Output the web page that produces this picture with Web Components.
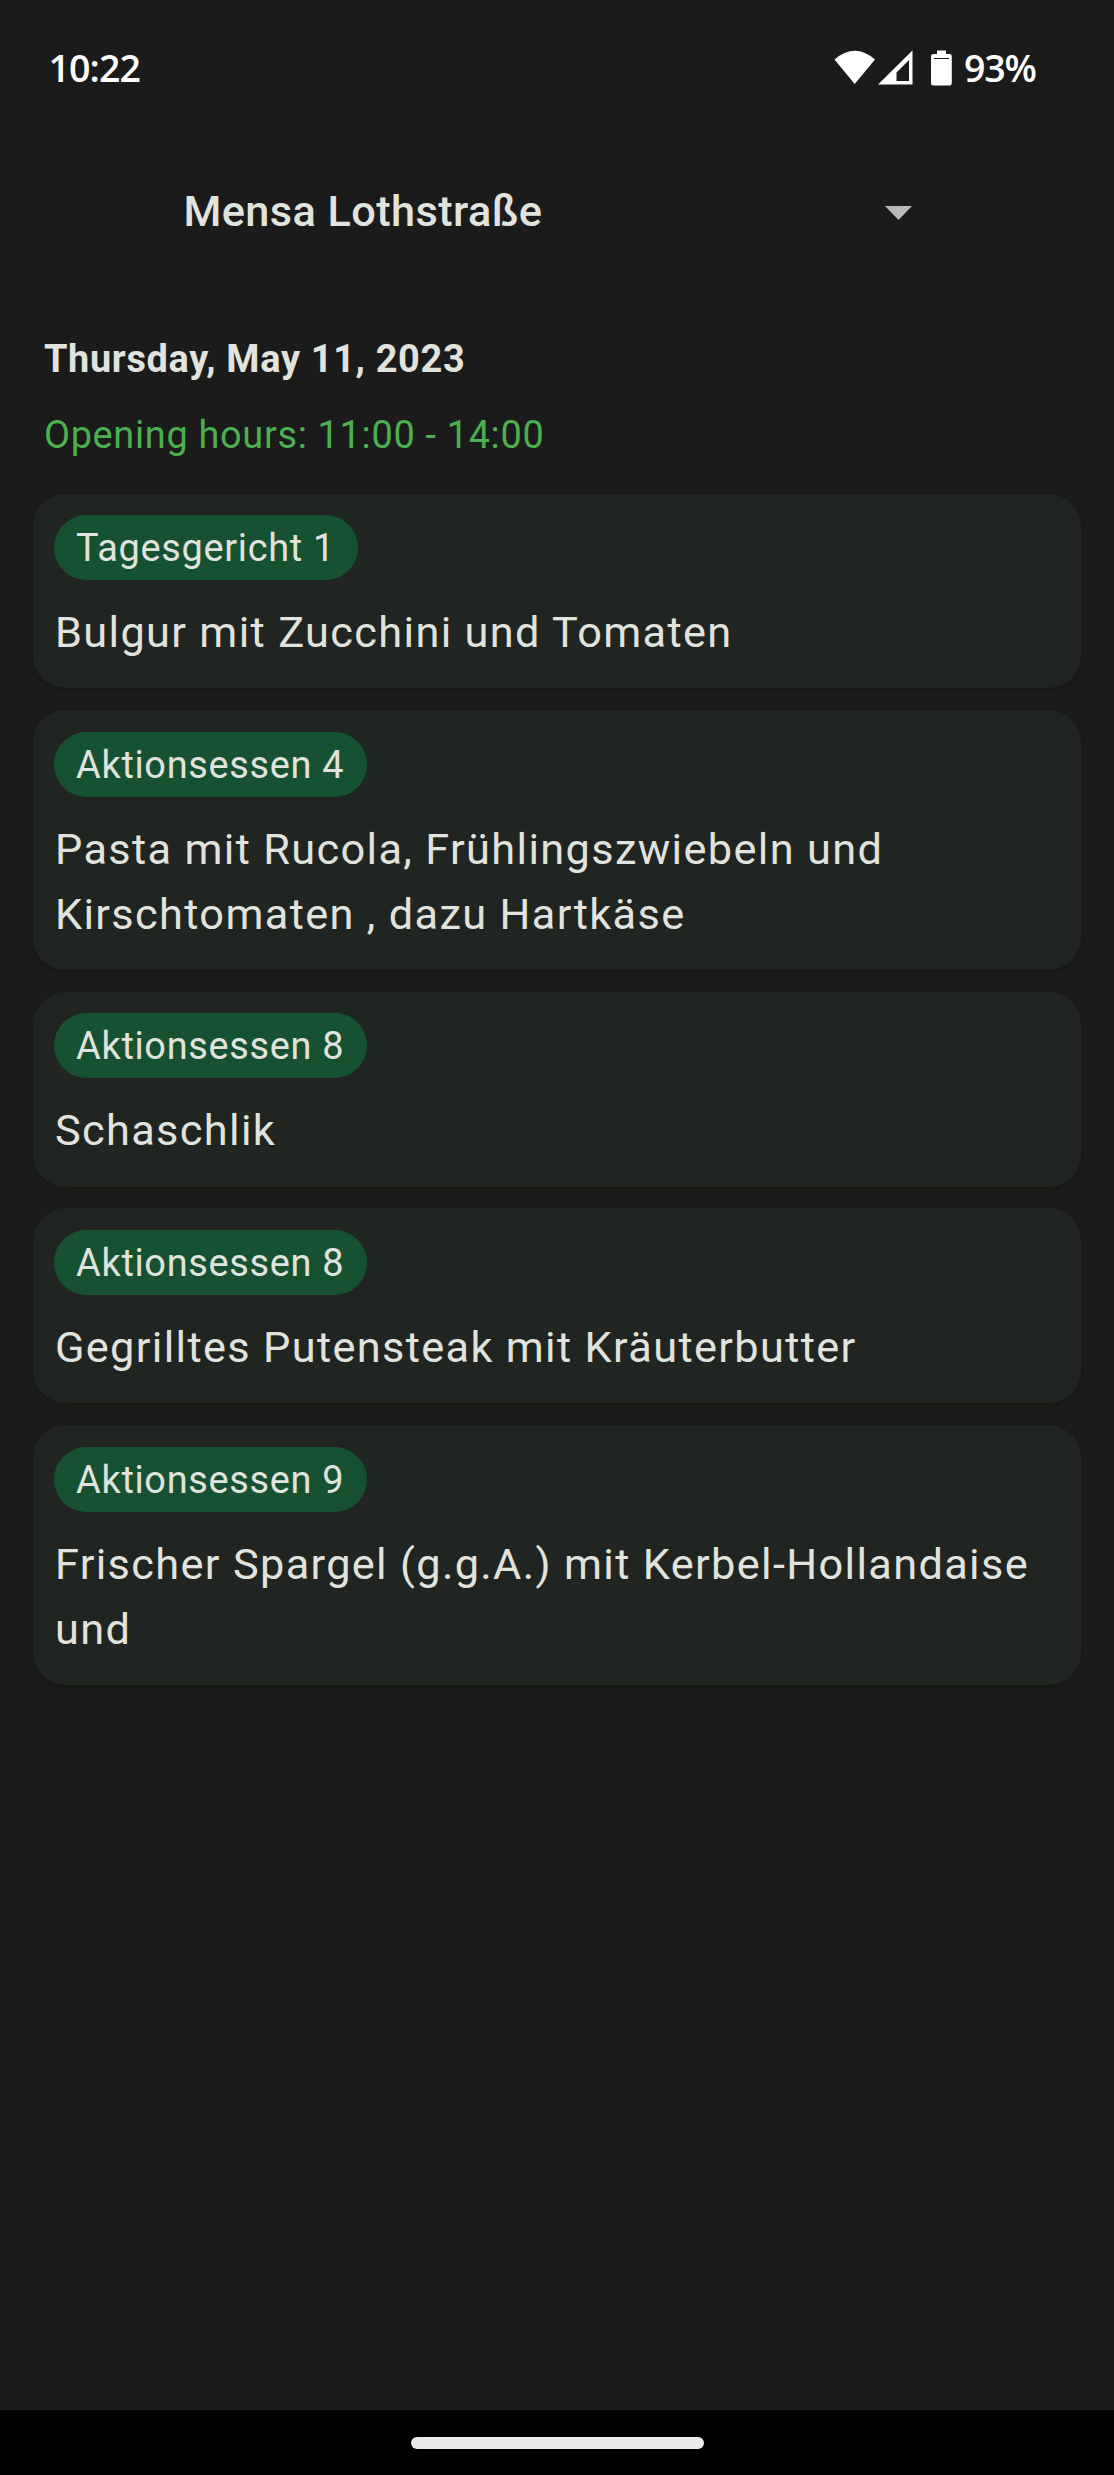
<!DOCTYPE html>
<html lang="en">
<head>
<meta charset="utf-8">
<title>Mensa</title>
<style>
  html, body { margin: 0; background: #1b1b1b; }
  body { --dp: 2.7078px; font-family: Roboto, sans-serif; color: #e1e3de; }
</style>
</head>
<body>
<mensa-app></mensa-app>
<script>
  const define = (name, html) => {
    const template = document.createElement('template');
    template.innerHTML = html;
    customElements.define(name, class extends HTMLElement {
      constructor() {
        super();
        this.attachShadow({ mode: 'open' }).append(template.content.cloneNode(true));
      }
    });
  };

  define('status-bar', `
    <style>
      :host { display: flex; justify-content: space-between; box-sizing: border-box; height: 136px; padding: 46px 78px 0 48.5px; color: #fff; font: 600 37.5px/44px "Open Sans", sans-serif; }
      .time { letter-spacing: -0.9px; }
      .right { display: flex; }
      svg { display: block; width: 122px; height: 45px; }
      .pct { width: 72px; margin-left: 8px; letter-spacing: -1.2px; }
    </style>
    <span class="time"><slot name="time"></slot></span>
    <span class="right">
      <svg viewBox="834 46 122 45" fill="#fff">
        <path d="M834.5 59.5Q854.7 42 875 59.5L854.7 84Z"/>
        <path fill-rule="evenodd" d="M878 84.5L912.5 50.5V84.5ZM896.5 81H909V60L896.5 72.5Z"/>
        <path fill-rule="evenodd" d="M937 50.5H946V54H949.5Q951.8 54 951.8 56.3V83Q951.8 85.5 949.5 85.5H933.5Q931 85.5 931 83V56.3Q931 54 933.5 54H937ZM934 58V59H949V58Z"/>
      </svg>
      <span class="pct"><slot name="battery"></slot></span>
    </span>`);

  define('mensa-picker', `
    <style>
      :host { display: flex; align-items: center; justify-content: space-between; box-sizing: border-box; height: 150px; padding: 0 202.5px 0 183.5px; font-size: 43.3px; font-weight: 500; line-height: 65px; letter-spacing: 0.4px; }
      svg { display: block; width: 27px; height: 14px; margin-top: 4px; }
    </style>
    <slot></slot>
    <svg viewBox="0 0 27 14" fill="#babbb8"><path d="M0 0H27L13.5 14Z"/></svg>`);

  define('day-header', `
    <style>
      :host { display: block; box-sizing: border-box; height: 207.5px; padding: 46.1px 43.9px 0; font-size: 37.9px; letter-spacing: 0.68px; }
      .date { font-weight: 700; line-height: 54px; }
      .hours { color: #4caf50; line-height: 54px; margin-top: 22px; }
    </style>
    <div class="date"><slot name="date"></slot></div>
    <div class="hours"><slot name="hours"></slot></div>`);

  define('meal-card', `
    <style>
      :host { display: flex; flex-direction: column; align-items: flex-start; gap: calc(8 * var(--dp)); padding: calc(8 * var(--dp)); border-radius: calc(12 * var(--dp)); background: #202521; box-shadow: 0 2.7px 3px rgba(18, 24, 12, .5); }
      .chip { box-sizing: border-box; height: calc(24 * var(--dp)); padding: 1px calc(8.6 * var(--dp)) 0 calc(8 * var(--dp)); border-radius: calc(12 * var(--dp)); background: #165231; font-size: 37.9px; line-height: 65px; letter-spacing: 0.68px; }
      .name { margin: -0.6px -8px 0.6px 0.5px; font-size: 43.3px; line-height: calc(24 * var(--dp)); letter-spacing: 1.35px; }
    </style>
    <div class="chip"><slot name="type"></slot></div>
    <div class="name"><slot></slot></div>`);

  define('nav-bar', `
    <style>
      :host { display: flex; justify-content: center; box-sizing: border-box; height: 65.3px; padding-top: 27px; background: #000; }
      i { width: 293px; height: 12px; border-radius: 6px; background: #ebebeb; }
    </style>
    <i></i>`);

  define('mensa-app', `
    <style>
      :host { display: flex; flex-direction: column; height: 2475px; overflow: hidden; background: #1b1b1b; }
      main { flex: 1; display: flex; flex-direction: column; gap: calc(8 * var(--dp)); padding: 0 33px 0 32.8px; }
    </style>
    <status-bar><span slot="time">10:22</span><span slot="battery">93%</span></status-bar>
    <mensa-picker>Mensa Lothstraße</mensa-picker>
    <day-header><span slot="date">Thursday, May 11, 2023</span><span slot="hours">Opening hours: 11:00 - 14:00</span></day-header>
    <main>
      <meal-card><span slot="type">Tagesgericht 1</span>Bulgur mit Zucchini und Tomaten</meal-card>
      <meal-card><span slot="type">Aktionsessen 4</span>Pasta mit Rucola, Frühlingszwiebeln und Kirschtomaten , dazu Hartkäse</meal-card>
      <meal-card><span slot="type">Aktionsessen 8</span>Schaschlik</meal-card>
      <meal-card><span slot="type">Aktionsessen 8</span>Gegrilltes Putensteak mit Kräuterbutter</meal-card>
      <meal-card><span slot="type">Aktionsessen 9</span>Frischer Spargel (g.g.A.) mit Kerbel-Hollandaise und</meal-card>
    </main>
    <nav-bar></nav-bar>`);
</script>
</body>
</html>
